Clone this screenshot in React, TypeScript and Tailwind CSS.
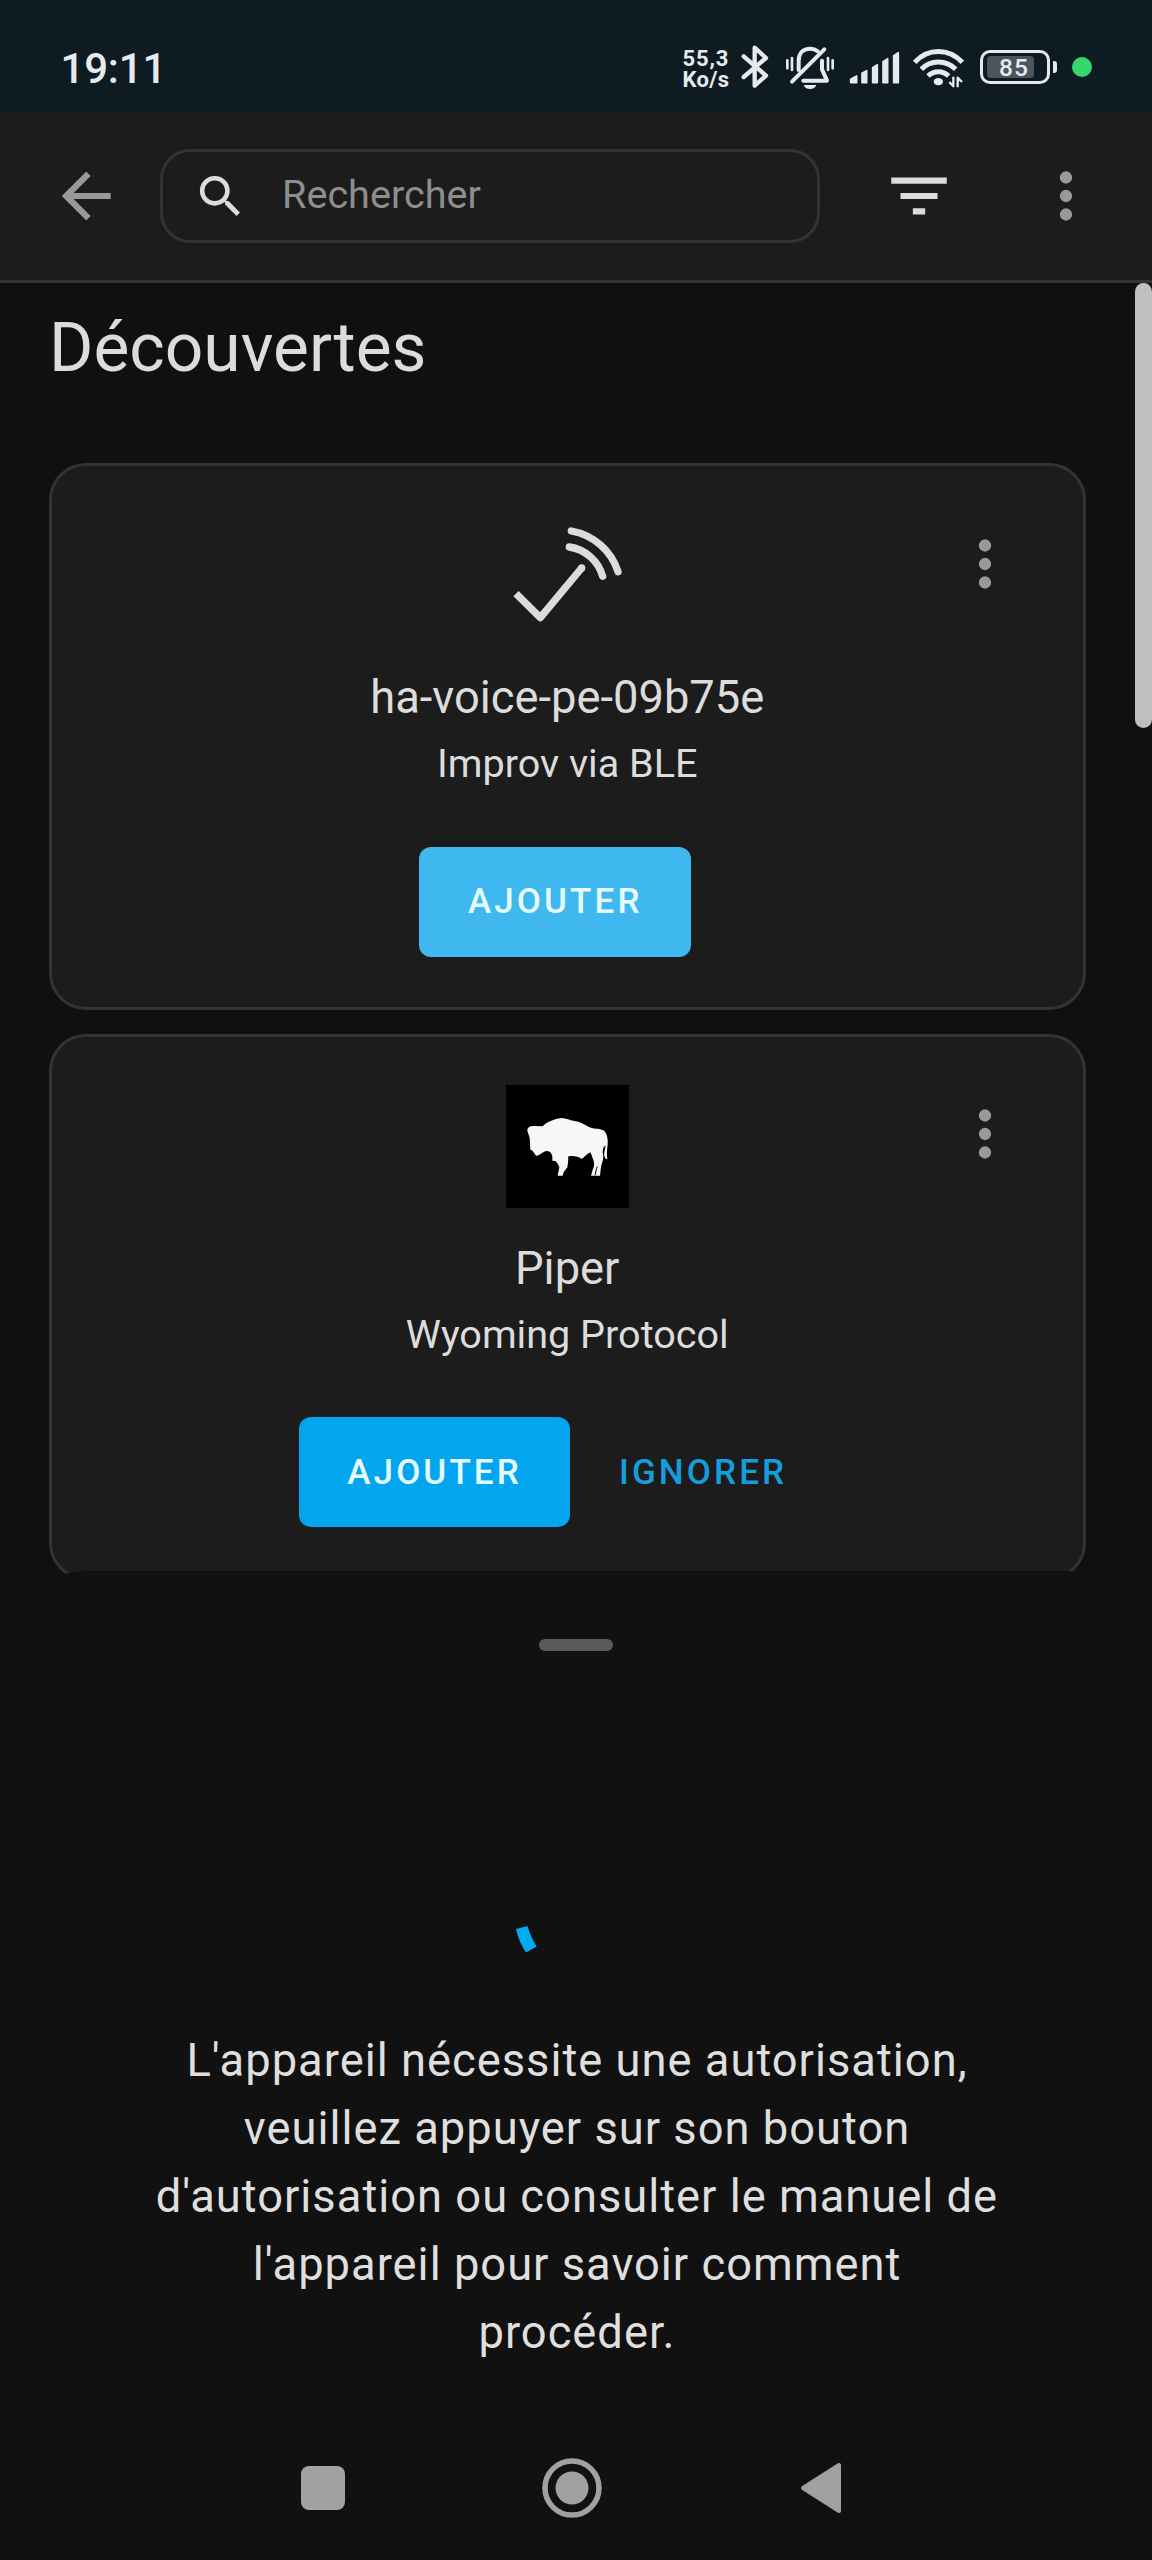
import React from "react";

function DotsVertical({ className = "" }: { className?: string }) {
  return (
    <svg viewBox="0 0 24 24" className={`size-[74px] fill-[#999999] ${className}`}>
      <path d="M12,16A2,2 0 0,1 14,18A2,2 0 0,1 12,20A2,2 0 0,1 10,18A2,2 0 0,1 12,16M12,10A2,2 0 0,1 14,12A2,2 0 0,1 12,14A2,2 0 0,1 10,12A2,2 0 0,1 12,10M12,4A2,2 0 0,1 14,6A2,2 0 0,1 12,8A2,2 0 0,1 10,6A2,2 0 0,1 12,4Z" />
    </svg>
  );
}

function BluetoothIcon() {
  return (
    <svg viewBox="240 60 90 160" className="h-[53.33px] w-[30px] fill-none stroke-[#e6eaec] stroke-[13]">
      <path d="M251 109 L318 167 L284 197 V83 L318 114 L251 171" strokeLinecap="round" strokeLinejoin="round" />
    </svg>
  );
}

function BellOffIcon() {
  return (
    <svg viewBox="372 60 156 160" className="ml-[14px] h-[53.33px] w-[52px] fill-none stroke-[#e6eaec]">
      <g strokeLinecap="round" strokeWidth="8">
        <path d="M382 121 V145 M396 114 V150 M504 114 V150 M518 121 V145" />
      </g>
      <path d="M396 185 L493 88" strokeWidth="12" strokeLinecap="round" />
      <path d="M416 150 V122 C416 98 431 86 450 86 C459 86 467 89 473 94" strokeWidth="12" strokeLinecap="round" />
      <path d="M486 122 V148 L501 182 H430" strokeWidth="12" strokeLinecap="round" strokeLinejoin="round" />
      <path d="M431 195 H469 C466 203 460 207 450 207 C440 207 434 203 431 195Z" stroke="none" fill="#e6eaec" />
    </svg>
  );
}

function SignalIcon() {
  return (
    <svg viewBox="567 60 153 160" className="ml-[13px] h-[53.33px] w-[51px] fill-[#e6eaec] stroke-[#e6eaec] stroke-[5]" strokeLinejoin="round">
      <path d="M572 178 L590 168 V188 H572Z M606 160 L620 152 V188 H606Z M638 143 L652 134 V188 H638Z M669 125 L683 116 V188 H669Z M701 107 L715 98 V188 H701Z" />
    </svg>
  );
}

function WifiIcon() {
  return (
    <svg viewBox="756 60 162 160" className="ml-3 h-[53.33px] w-[54px] fill-none stroke-[#e6eaec] stroke-[15]">
      <path d="M764 127 C804 84 866 84 907 127" />
      <path d="M784 148 C812 119 858 119 887 148" />
      <path d="M804 168 C822 151 848 151 866 168" />
      <ellipse cx="835" cy="185" rx="14" ry="11" stroke="none" fill="#e6eaec" />
      <path d="M880 170 V199 L868 186 M893 202 V173 L906 186" strokeWidth="7" strokeLinejoin="round" />
    </svg>
  );
}

function StatusBar() {
  return (
    <header className="flex h-28 items-start bg-[#0f1b22] text-[#e6eaec]">
      <span className="mt-[44px] ml-[60.5px] text-[42px] leading-[50px] font-medium tracking-[-0.2px]">19:11</span>
      <div className="mt-10 ml-auto flex h-[54px] items-start">
        <div className="mt-[8px] mr-[11.5px] w-[46px] text-[22px] leading-[21px] font-bold whitespace-nowrap">
          <p className="tracking-[0.9px]">55,3</p>
          <p className="tracking-[0.3px]">Ko/s</p>
        </div>
        <BluetoothIcon />
        <BellOffIcon />
        <SignalIcon />
        <WifiIcon />
        <div className="mt-[10px] ml-[14px] flex h-[34px] w-[70px] items-center rounded-[10px] border-[3px] border-[#e6eaec] p-[4px]">
          <div className="relative h-[22px] w-[47px] rounded-[4px] bg-[#4b555b]">
            <span className="absolute top-0 left-[12px] text-[24.5px] leading-[24px] font-medium tracking-[1px]">85</span>
          </div>
        </div>
        <div className="mt-[21px] ml-[3px] h-[12px] w-[4px] rounded-r-[3px] bg-[#e6eaec]" />
        <div className="mt-[16.5px] mr-[60px] ml-[14.5px] size-[20.5px] rounded-full bg-[#36d66b]" />
      </div>
    </header>
  );
}

function Toolbar() {
  return (
    <div className="flex h-[171px] items-center border-b-[3px] border-[#333333] bg-[#1c1c1c]">
      <svg viewBox="0 0 24 24" className="ml-[49px] size-[74px] fill-[#999999]">
        <path d="M20,11V13H8L13.5,18.5L12.08,19.92L4.16,12L12.08,4.08L13.5,5.5L8,11H20Z" />
      </svg>
      <div className="ml-[37px] flex h-[94px] w-[660px] items-center rounded-[30px] border-[3px] border-[#333333]">
        <svg viewBox="0 0 24 24" className="ml-[30px] size-[55px] fill-[#dcdcdc]">
          <path d="M9.5,3A6.5,6.5 0 0,1 16,9.5C16,11.11 15.41,12.59 14.44,13.73L14.71,14H15.5L20.5,19L19,20.5L14,15.5V14.71L13.73,14.44C12.59,15.41 11.11,16 9.5,16A6.5,6.5 0 0,1 3,9.5A6.5,6.5 0 0,1 9.5,3M9.5,5C7,5 5,7 5,9.5C5,12 7,14 9.5,14C12,14 14,12 14,9.5C14,7 12,5 9.5,5Z" />
        </svg>
        <span className="-mt-[3px] ml-[34px] text-[39.6px] leading-[60px] text-[#8e8e8e]">Rechercher</span>
      </div>
      <svg viewBox="0 0 24 24" className="ml-[62px] size-[74px] fill-[#dcdcdc]">
        <path d="M6,13H18V11H6M3,6V8H21V6M10,18H14V16H10V18Z" />
      </svg>
      <DotsVertical className="ml-[73px]" />
    </div>
  );
}

function ImprovIcon() {
  return (
    <svg viewBox="318 193 369 369" className="size-[123px] fill-none stroke-[#dcdcdc] stroke-[22]">
      <path d="M348 429 L421 501 L545 352" strokeLinejoin="round" />
      <circle cx="545" cy="352" r="11" stroke="none" fill="#dcdcdc" />
      <path d="M508 289 A122 122 0 0 1 608 377 M514 241 A180 180 0 0 1 654 363" strokeLinecap="round" />
    </svg>
  );
}

function BisonIcon() {
  return (
    <svg viewBox="318 75 369 369" className="size-[123px] bg-black">
      <path
        fill="#f7f7f7"
        d="M382 212 C382 201 392 197 405 198 L428 199 C440 186 462 177 484 174 C500 175 512 182 535 185 C550 189 562 201 578 205 C592 207 606 206 615 215 C623 226 625 245 622 262 C620 275 621 288 622 298 C613 296 611 285 614 272 L617 256 C611 260 608 266 608 276 C611 288 610 300 606 308 C602 320 602 335 600 347 H573 L578 329 C584 318 583 308 580 300 C576 291 575 284 571 277 C562 281 554 291 545 297 C535 289 520 287 505 289 C505 301 504 312 502 322 C496 330 490 336 488 347 H473 L478 322 C474 312 470 306 466 303 L457 302 V288 C454 277 447 273 438 273 C428 275 420 286 409 287 C402 281 400 270 391 269 C390 250 391 235 386 224Z"
      />
      <path d="M592 320 C588 328 588 336 585 346" stroke="black" strokeWidth="3" fill="none" />
    </svg>
  );
}

type CardProps = {
  icon: React.ReactNode;
  title: string;
  subtitle: string;
  actions: React.ReactNode;
};

function DiscoveryCard({ icon, title, subtitle, actions }: CardProps) {
  return (
    <article className="relative flex h-[546.5px] flex-col items-center rounded-[37px] border-[3px] border-[#333333] bg-[#1c1c1c] pt-[48.5px] text-[#dcdcdc]">
      <DotsVertical className="absolute top-[60.5px] right-[60.5px]" />
      {icon}
      <h2 className="mt-[30.5px] text-[45.3px] leading-[60px]">{title}</h2>
      <p className="mt-[6px] text-[39.6px] leading-[60px]">{subtitle}</p>
      <div className="mt-[52.5px] flex">{actions}</div>
    </article>
  );
}

const buttonBase = "h-[110px] px-[48.5px] pt-[2px] text-[35px] font-medium tracking-[3.12px]";

export default function App() {
  return (
    <div className="relative flex h-[2560px] w-[1152px] flex-col overflow-hidden bg-[#101010] font-['Roboto',sans-serif]">
      <StatusBar />
      <Toolbar />
      <main className="relative flex-1 pt-[25px] pr-[66.5px] pl-[49px]">
        <h1 className="text-[67.7px] leading-[80px] text-[#dcdcdc]">Découvertes</h1>
        <div className="mt-[75px] flex flex-col gap-[24px]">
          <DiscoveryCard
            icon={<ImprovIcon />}
            title="ha-voice-pe-09b75e"
            subtitle="Improv via BLE"
            actions={<button className={`${buttonBase} mr-[24px] rounded-[12px] bg-[#3fb7ef] text-[#e4fcff]`}>AJOUTER</button>}
          />
          <DiscoveryCard
            icon={<BisonIcon />}
            title="Piper"
            subtitle="Wyoming Protocol"
            actions={
              <>
                <button className={`${buttonBase} rounded-[12px] bg-[#04a5ef] text-[#e4fcff]`}>AJOUTER</button>
                <button className={`${buttonBase} text-[#159ddd]`}>IGNORER</button>
              </>
            }
          />
        </div>
        <div className="absolute top-0 right-0 h-[445px] w-[17px] rounded-full bg-[#bfbfbf]" />
      </main>

      <section className="absolute inset-x-0 bottom-0 flex h-[989px] flex-col items-center rounded-t-[86px] bg-[#111111] pt-[68px]">
        <div className="h-[12px] w-[74px] rounded-full bg-[#5a595b]" />
        <svg viewBox="0 0 120 120" className="mt-[218.5px] size-[120px] fill-[#03a9f4]">
          <path d="M0 59 L11.5 56 C14 64 16.5 70 20.7 76.5 L10 82.5 C5 75 2 68 0 59Z" />
        </svg>
        <p className="mt-[37.5px] ml-[2px] text-center text-[45.3px] leading-[68px] tracking-[1px] text-[#dfdfdf]">
          L'appareil nécessite une autorisation,
          <br />
          veuillez appuyer sur son bouton
          <br />
          d'autorisation ou consulter le manuel de
          <br />
          l'appareil pour savoir comment
          <br />
          procéder.
        </p>
        <nav className="mt-auto mr-[8px] mb-[39px] flex h-[66px] w-[542px] items-center justify-between">
          <div className="size-[44px] rounded-[8px] bg-[#a1a1a1]" />
          <svg viewBox="0 0 66 66" className="size-[66px] fill-none stroke-[#a1a1a1]">
            <circle cx="33" cy="33" r="27" strokeWidth="5.5" />
            <circle cx="33" cy="33" r="16.5" fill="#a1a1a1" stroke="none" />
          </svg>
          <svg viewBox="0 0 44 56" className="h-[56px] w-[44px] fill-[#a1a1a1] stroke-[#a1a1a1] stroke-[4]" strokeLinejoin="round">
            <path d="M4 28 L40 5 V51Z" />
          </svg>
        </nav>
      </section>
    </div>
  );
}
